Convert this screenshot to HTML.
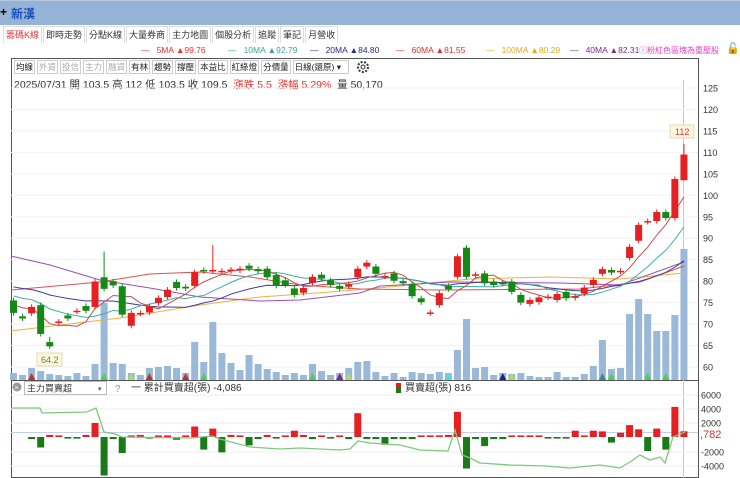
<!DOCTYPE html>
<html><head><meta charset="utf-8">
<style>
*{margin:0;padding:0;box-sizing:border-box}
body{width:740px;height:478px;overflow:hidden;background:#fff;font-family:"Liberation Sans","Noto Sans CJK TC",sans-serif;position:relative}
.title{position:absolute;left:0;top:0;width:740px;height:25px;background:#95b3d7;border-top:1px solid #b8c8dc}
.title span{position:absolute;top:4px;font-size:12px;font-weight:bold;color:#1a4fc0}
.tabs{position:absolute;top:26px;left:3px;height:17px;display:flex}
.tab{font-size:9px;color:#333;padding:1px 2px;border:1px solid #ddd;border-bottom:none;margin-right:1px;height:17px;line-height:14px;background:#fff}
.tab.act{color:#e03a3a}
.leg{position:absolute;top:45px;font-size:8.5px;white-space:nowrap}
.tb{position:absolute;top:60px;left:14px;display:flex}
.b{font-size:8.5px;border:1px solid #ccc;height:14px;line-height:12px;padding:0 1px;margin-right:2px;color:#222;background:#fff}
.b.g{color:#aaa}
.info{position:absolute;top:77px;left:14px;font-size:10.5px;color:#333;white-space:nowrap}
svg{position:absolute;left:0;top:0}
</style></head><body>
<div class="title"><span style="left:0;color:#000">+</span><span style="left:11px">新漢</span></div>
<div class="tabs">
<div class="tab act">籌碼K線</div><div class="tab">即時走勢</div><div class="tab">分點K線</div><div class="tab">大量券商</div><div class="tab">主力地圖</div><div class="tab">個股分析</div><div class="tab">追蹤</div><div class="tab">筆記</div><div class="tab">月營收</div>
</div>
<div class="leg" style="left:141px;color:#d33">— &nbsp; 5MA ▲99.76</div>
<div class="leg" style="left:228px;color:#3aa88a">— &nbsp; 10MA ▲92.79</div>
<div class="leg" style="left:310px;color:#2a2a90">— &nbsp; 20MA ▲84.80</div>
<div class="leg" style="left:396px;color:#e03030">— &nbsp; 60MA ▲81.55</div>
<div class="leg" style="left:486px;color:#e8a820">— &nbsp; 100MA ▲80.29</div>
<div class="leg" style="left:570px;color:#7a2a90">— &nbsp; 40MA ▲82.31</div>
<div class="leg" style="left:639px;color:#e040c0;font-size:8px">ⓘ粉紅色區塊為重壓股</div>
<div class="leg" style="left:726px;top:42px;font-size:11px">🔓</div>
<div class="tb">
<div class="b">均線</div><div class="b g">外資</div><div class="b g">投信</div><div class="b g">主力</div><div class="b g">融資</div><div class="b">有林</div><div class="b">趨勢</div><div class="b">撐壓</div><div class="b">本益比</div><div class="b">紅綠燈</div><div class="b">分價量</div><div class="b" style="width:56px">日線(還原) ▾</div>
</div>
<div class="info">2025/07/31 開 103.5 高 112 低 103.5 收 109.5 &nbsp;<span style="color:#e03030">漲跌 5.5 &nbsp;漲幅 5.29%</span> &nbsp;量 50,170</div>
<svg id="s" width="740" height="478" xmlns="http://www.w3.org/2000/svg" font-family="Liberation Sans, Noto Sans CJK TC, sans-serif">
<rect x="11.5" y="58.5" width="687" height="419" fill="none" stroke="#555"/>
<line x1="11" y1="380.5" x2="698" y2="380.5" stroke="#555"/>
<circle cx="363" cy="67" r="5" fill="none" stroke="#333" stroke-width="2" stroke-dasharray="2 1.5"/>
<circle cx="363" cy="67" r="2" fill="none" stroke="#333"/>
<line x1="683.5" y1="80" x2="683.5" y2="478" stroke="#b8c8ea"/>
<g id="g"></g>
<circle cx="17" cy="387" r="4.5" fill="#999"/><text x="14.5" y="390" font-size="7" fill="#fff">×</text>
<rect x="24.5" y="381.5" width="82" height="13" fill="#fff" stroke="#bbb"/>
<text x="27" y="391.5" font-size="9" fill="#333">主力買賣超</text><text x="98" y="391" font-size="7" fill="#555">▾</text>
<text x="115" y="392" font-size="10" fill="#6a9ad0">?</text>
<text x="131" y="391" font-size="10" fill="#333">一 累計買賣超(張) -4,086</text>
<rect x="396" y="383" width="5" height="5" fill="#e02020"/><rect x="396" y="388" width="5" height="5" fill="#1a7a1a"/>
<text x="405" y="391" font-size="10" fill="#333">買賣超(張) 816</text>
<rect x="670" y="125" width="24" height="13" fill="#fff8e0" stroke="#e8d8a8"/>
<text x="675" y="135" font-size="9" fill="#d33">112</text>
<rect x="37" y="353" width="25" height="13" fill="#fff8e0" stroke="#e8d8a8"/>
<text x="41" y="363" font-size="9" fill="#5a8a3a">64.2</text>
</svg>
<script>
var g=document.getElementById('g'),h='';
function Y(p){return 88+(125-p)*4.292}
function X(i){return 13.5+i*9.06}
for(var p=60;p<=125;p+=5){var y=Y(p);h+='<line x1="11" x2="698" y1="'+y+'" y2="'+y+'" stroke="#f2f2f2"/><text x="703" y="'+(y+3.5)+'" font-size="9" fill="#333">'+p+'</text>';}
var ax=[[6000,395],[4000,409],[2000,423],[-2000,452],[-4000,466]];
ax.forEach(function(a){h+='<line x1="11" x2="698" y1="'+a[1]+'" y2="'+a[1]+'" stroke="#eee"/><text x="701" y="'+(a[1]+3.5)+'" font-size="9" fill="#333">'+a[0]+'</text>';});
h+='<text x="700" y="438" font-size="11" fill="#c33">,782</text>';
h+='<line x1="11" x2="698" y1="432.5" y2="432.5" stroke="#c4cef0"/>';
var C=[[75.5,72.6],[71.8,71.3],[72.5,74],[74.4,67.7],[65.8,64.8,67,64.2],[70.3,70.6],[72,71.3],[72.9,73.1],[74.2,73.1],[74,79.9],[80.9,78.2,86.9],[80,79],[78.8,72.2],[69.6,72.6],[72.4,72.6],[72.7,74.2],[74.9,76.1],[76.3,78],[79.8,78.4],[78.7,78.3],[78.9,82.1],[82.6,82.3],[82.4,82.6,88.4],[82.2,82.4],[82.3,82.7],[82.5,82.9],[83.6,82.9],[82.8,82.3],[82.9,80.9],[81.4,78.9],[80.2,79.1],[78.3,76.8],[77.3,78.4],[79.6,81],[81.5,80.6],[80.2,79.1],[78.9,78.2],[78.7,79.3],[80.9,82.9],[83.4,84.3],[83.4,81.7],[81,81.2],[81.8,80.1],[80,79.5],[79.3,76.5],[76,75.1],[72.5,72.7],[74.4,77.2],[78.9,78.1],[81,85.8],[87.8,81],[81.4,81.6],[81.8,79.5],[79.9,79.1],[79.6,79.4],[79.9,77.5],[76.8,75],[74.7,75.6],[75.1,76.2],[76.2,76.4],[75.6,77],[77.5,76],[76.1,76.5],[77.1,78.5],[79.1,80.3],[81.7,82.8],[82.6,82],[82.2,82.4],[85.4,88],[89.4,93.1],[93.8,94],[94,96.1],[96.1,94.7],[94.7,103.8],[103.5,109.5,112,103.5]];
var V=[373,375,368,371,374,375,376,373,376,364,303,363,364,373,375,368,367,366,368,373,342,362,322,353,363,370,355,364,369,372,375,373,375,364,371,375,373,368,362,361,372,376,373,377,372,373,374,372,373,350,319,368,367,375,373,374,373,376,377,377,372,377,377,374,366,340,369,368,314,299,314,331,331,315,249];
var B={2:-300,3:-1500,4:300,5:200,6:-200,7:-200,8:300,9:2000,10:-5500,11:-300,12:-2300,13:200,14:300,15:-200,16:200,17:200,18:-400,19:200,20:1500,21:-1800,22:1200,23:-2200,24:300,25:200,26:-1200,27:-300,28:300,29:-200,30:200,31:900,32:300,33:-300,34:200,35:-200,36:200,37:-300,38:3400,39:-300,40:-300,41:-1100,42:-300,43:-300,44:-300,45:200,46:100,47:200,48:300,49:3600,50:-4500,51:-300,52:-1300,53:-300,54:-300,55:100,56:100,57:200,58:100,59:-200,60:-200,61:-100,62:900,63:200,64:900,65:800,66:-800,67:600,68:1700,69:1100,70:-2000,71:1200,72:-1800,73:4300,74:816};
var mk={2:'#c03030',10:'#4ccf4c',13:'#a8e060',15:'#c03030',19:'#c03030',21:'#4ccf4c',33:'#4ccf4c',36:'#7a2a90',37:'#a8e060',48:'#40e0e0',54:'#1a2a80',55:'#a8e060',65:'#3a8a8a',66:'#4ccf4c',70:'#4ccf4c',72:'#4ccf4c'};
for(var i=0;i<C.length;i++){var x=X(i),c=C[i];
 h+='<rect x="'+(x-3.5)+'" y="'+V[i]+'" width="7" height="'+(380-V[i])+'" fill="#9ab8d8"/>';
 if(mk[i])h+='<polygon points="'+(x-3.5)+',380 '+x+',373 '+(x+3.5)+',380" fill="'+mk[i]+'"/>';
 var v=B[i]||0;if(v){var yy=437,hh=Math.abs(v)/2000*14;hh=Math.max(hh,1.6);h+='<rect x="'+(x-3.5)+'" y="'+(v>0?yy-hh:yy)+'" width="7" height="'+hh+'" fill="'+(v>0?'#e62020':'#1a7a1a')+'"/>';}
}
var cl=[[11,408],[40,408],[42,413],[87,412],[96,408],[104,432],[115,434],[122,437],[190,438],[212,436],[220,439],[250,447],[280,449],[300,448],[340,450],[350,449],[358,441],[370,443],[400,445],[420,450],[448,451],[455,430],[462,455],[470,458],[480,463],[510,465],[545,466],[570,468],[600,465],[620,468],[630,462],[640,455],[650,460],[660,457],[665,463],[673,437],[685,432]];
h+='<polyline fill="none" stroke="#80c880" stroke-width="1.3" points="'+cl.map(function(a){return a.join(',')}).join(' ')+'"/>';
function sma(n,pad){var o=[];for(var i=0;i<C.length;i++){var s=0;for(var k=i-n+1;k<=i;k++)s+=(k<0?pad:C[k][1]);o.push(s/n)}return o}
function pl(a,col){return '<polyline fill="none" stroke="'+col+'" stroke-width="1" points="'+a.map(function(v,i){return X(i)+','+Y(v)}).join(' ')+'"/>'}
function man(pts,col){return '<polyline fill="none" stroke="'+col+'" stroke-width="1" points="'+pts.map(function(a){return a.join(',')}).join(' ')+'"/>'}
h+=man([[11,331],[60,325],[120,318],[200,305],[260,297],[330,292],[400,286],[470,279],[550,277],[620,279],[684,273]],'#f0b040');
h+=man([[11,290],[100,282],[150,274],[200,272],[250,277],[300,285],[360,289],[440,290],[580,289],[640,282],[684,266]],'#e05050');
h+=man([[11,256],[50,265],[100,280],[150,288],[200,297],[260,301],[300,300],[360,293],[380,286],[450,282],[560,283],[620,285],[684,262]],'#9a50b0');
h+=pl(sma(20,79),'#3a3aa0');h+=pl(sma(10,77),'#40b0a0');h+=pl(sma(5,75),'#c05050');
for(var i=0;i<C.length;i++){var x=X(i),c=C[i],o=c[0],cc=c[1],up=cc>=o,col=up?'#e62020':'#138a13';
 var hi=c[2]||Math.max(o,cc)+0.6,lo=c[3]||Math.min(o,cc)-0.6;
 h+='<line x1="'+x+'" x2="'+x+'" y1="'+Y(hi)+'" y2="'+Y(lo)+'" stroke="'+col+'"/>';
 var t=Y(Math.max(o,cc)),bh=Math.max(Math.abs(o-cc)*4.292,1.5);
 h+='<rect x="'+(x-3.5)+'" y="'+t+'" width="7" height="'+bh+'" fill="'+col+'"/>';}
g.innerHTML=h;
</script>
</body></html>
